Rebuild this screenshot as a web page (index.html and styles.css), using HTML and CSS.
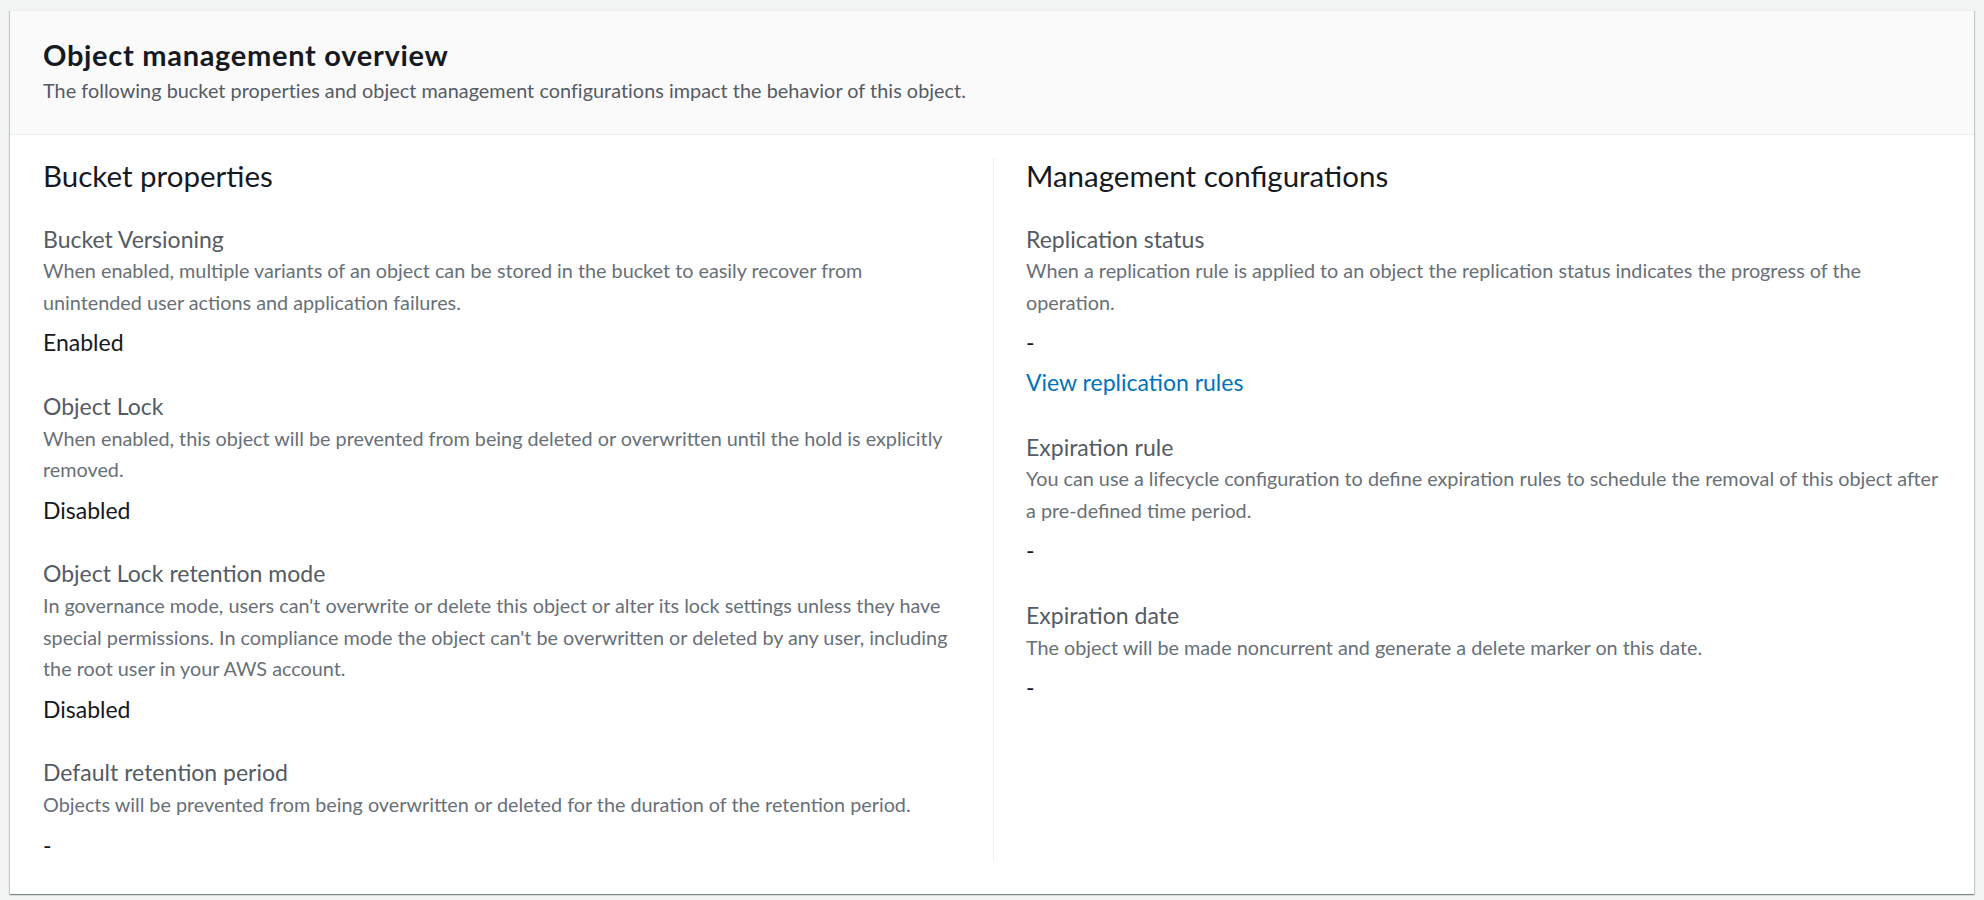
FILE: index.html
```html
<!DOCTYPE html>
<html lang="en">
<head>
<meta charset="utf-8">
<title>Object management overview</title>
<link rel="stylesheet" href="styles.css">
</head>
<body>
<section class="card">
  <header class="card-header">
    <h2 class="card-title">Object management overview</h2>
    <p class="card-desc">The following bucket properties and object management configurations impact the behavior of this object.</p>
  </header>
  <div class="card-body">
    <div class="column">
      <h3 class="col-title">Bucket properties</h3>
      <div class="item">
        <div class="label">Bucket Versioning</div>
        <div class="desc">When enabled, multiple variants of an object can be stored in the bucket to easily recover from<br>unintended user actions and application failures.</div>
        <div class="value">Enabled</div>
      </div>
      <div class="item">
        <div class="label">Object Lock</div>
        <div class="desc">When enabled, this object will be prevented from being deleted or overwritten until the hold is explicitly<br>removed.</div>
        <div class="value">Disabled</div>
      </div>
      <div class="item">
        <div class="label">Object Lock retention mode</div>
        <div class="desc">In governance mode, users can't overwrite or delete this object or alter its lock settings unless they have<br>special permissions. In compliance mode the object can't be overwritten or deleted by any user, including<br>the root user in your AWS account.</div>
        <div class="value">Disabled</div>
      </div>
      <div class="item">
        <div class="label">Default retention period</div>
        <div class="desc">Objects will be prevented from being overwritten or deleted for the duration of the retention period.</div>
        <div class="value">-</div>
      </div>
    </div>
    <div class="column column-right">
      <h3 class="col-title">Management configurations</h3>
      <div class="item">
        <div class="label">Replication status</div>
        <div class="desc">When a replication rule is applied to an object the replication status indicates the progress of the<br>operation.</div>
        <div class="value">-</div>
        <a class="link" href="#">View replication rules</a>
      </div>
      <div class="item">
        <div class="label">Expiration rule</div>
        <div class="desc">You can use a lifecycle configuration to define expiration rules to schedule the removal of this object after<br>a pre-defined time period.</div>
        <div class="value">-</div>
      </div>
      <div class="item">
        <div class="label">Expiration date</div>
        <div class="desc">The object will be made noncurrent and generate a delete marker on this date.</div>
        <div class="value">-</div>
      </div>
    </div>
  </div>
</section>
</body>
</html>
```

FILE: styles.css
```css
html, body {
  margin: 0;
  padding: 0;
}
body {
  background: #f2f3f3;
  padding: 10px 10px 6px 10px;
  font-family: Lato, "Liberation Sans", sans-serif;
  color: #16191f;
}
.card {
  background: #ffffff;
  border-top: 1px solid #eaeded;
  box-shadow: 0 1px 1px 0 rgba(0, 28, 36, 0.3), 1px 1px 1px 0 rgba(0, 28, 36, 0.15), -1px 1px 1px 0 rgba(0, 28, 36, 0.15);
}
.card-header {
  background: #fafafa;
  border-bottom: 1px solid #eaeded;
  padding: 26px 33px 27px 33px;
}
.card-title {
  margin: 0;
  font-size: 29px;
  line-height: 35px;
  font-weight: 700;
  letter-spacing: 0.7px;
  color: #16191f;
}
.card-desc {
  margin: 3px 0 0 0;
  font-size: 19.8px;
  line-height: 31.6px;
  letter-spacing: 0.05px;
  color: #545b64;
}
.card-body {
  display: grid;
  grid-template-columns: 950px 1fr;
  padding: 23px 10px 33px 33px;
}
.column {
  padding-right: 32px;
  min-width: 0;
}
.column-right {
  border-left: 1px solid #eaeded;
  padding-left: 32px;
  padding-right: 0;
}
.col-title {
  margin: 0 0 31px 0;
  font-size: 29.5px;
  line-height: 35px;
  font-weight: 400;
  color: #16191f;
}
.item {
  display: flex;
  flex-direction: column;
  align-items: flex-start;
}
.item + .item {
  margin-top: 32px;
}
.column-right .item + .item {
  margin-top: 33px;
}
.label {
  font-size: 23px;
  line-height: 31.6px;
  color: #545b64;
}
.desc {
  font-size: 19.8px;
  line-height: 31.6px;
  color: #687078;
  white-space: nowrap;
}
.value {
  margin-top: 9px;
  font-size: 23px;
  line-height: 31.6px;
  color: #16191f;
}
.link {
  margin-top: 8px;
  font-size: 23px;
  line-height: 31.6px;
  color: #0073bb;
  text-decoration: none;
}
```
